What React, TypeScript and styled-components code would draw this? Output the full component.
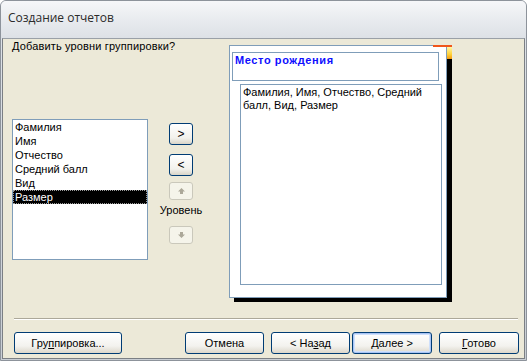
import React from "react";
import styled, { createGlobalStyle, css } from "styled-components";

const GlobalStyle = createGlobalStyle`
    html, body {
        margin: 0;
        padding: 0;
        background: #ffffff;
    }
    body {
        font-family: "Liberation Sans", Arial, sans-serif;
        font-size: 11px;
        color: #000000;
    }
`;

const Window = styled.div`
    width: 527px;
    height: 361px;
    display: flex;
    flex-direction: column;
    box-sizing: border-box;
    border-radius: 6px 6px 0 0;
    overflow: hidden;
    background: #cfd3d9;
    border: 1px solid #8d939b;
`;

const TitleBar = styled.div`
    height: 37px;
    flex: none;
    box-sizing: border-box;
    padding: 9px 0 0 7px;
    background: linear-gradient(#f6f7f9, #e6e9ed 60%, #dde1e6);
    font-family: "Open Sans", "Liberation Sans", sans-serif;
    font-size: 12px;
    line-height: 16px;
    color: #2b2b2b;
`;

const Frame = styled.div`
    flex: 1;
    display: flex;
    padding: 0 1px 1px 1px;
    background: linear-gradient(#dde1e6, #c9ced4);
`;

const Body = styled.div`
    flex: 1;
    display: flex;
    flex-direction: column;
    background: #ece9d8;
    border: 1px solid #7b7f84;
    border-top-color: #9aa0a7;
`;

const Main = styled.div`
    height: 279px;
    display: flex;
    align-items: flex-start;
    padding-left: 9px;
`;

const LeftPane = styled.div`
    width: 217px;
    display: flex;
    flex-direction: column;
`;

const Heading = styled.div`
    line-height: 14px;
    white-space: nowrap;
    letter-spacing: 0.15px;
`;

const Picker = styled.div`
    margin-top: 66px;
    display: flex;
    align-items: flex-start;
`;

const ListBox = styled.div`
    width: 136px;
    height: 141px;
    box-sizing: border-box;
    border: 1px solid #7f9db9;
    background: #ffffff;
    padding: 0;
`;

const ListItem = styled.div<{ $selected?: boolean }>`
    line-height: 14px;
    padding-left: 2px;
    white-space: nowrap;
    ${p =>
        p.$selected &&
        css`
            background: #000000;
            color: #ffffff;
            outline: 1px dotted #9a9a9a;
            outline-offset: -1px;
        `}
`;

const Controls = styled.div`
    width: 48px;
    margin-left: 9px;
    padding-top: 4px;
    display: flex;
    flex-direction: column;
    align-items: center;
`;

const SmallButton = styled.button<{ $gap?: number }>`
    width: 24px;
    height: 22px;
    margin: ${p => p.$gap ?? 0}px 0 0 0;
    padding: 0;
    box-sizing: border-box;
    border: 1px solid #003c74;
    border-radius: 3px;
    background: linear-gradient(#ffffff, #f2f1ec 70%, #d9d5c8);
    font-family: "Liberation Sans", Arial, sans-serif;
    font-size: 12px;
    line-height: 18px;
    color: #000000;
`;

const DisabledButton = styled.div<{ $gap?: number }>`
    width: 24px;
    height: 18px;
    margin-top: ${p => p.$gap ?? 0}px;
    box-sizing: border-box;
    border: 1px solid #cac8bb;
    border-radius: 3px;
    background: #f5f4ea;
    display: flex;
    align-items: center;
    justify-content: center;
`;

const LevelLabel = styled.div`
    margin-top: 3px;
    line-height: 14px;
    white-space: nowrap;
`;

const Preview = styled.div`
    position: relative;
    width: 218px;
    height: 253px;
    margin-top: 6px;
    box-sizing: border-box;
    border: 1px solid #7f9db9;
    background: #ffffff;
    box-shadow: 5px 4px 0 #000000;
    display: flex;
    flex-direction: column;
    align-items: flex-start;
`;

const Marker = styled.div`
    position: absolute;
    top: -1px;
    left: 203px;
    width: 19px;
    height: 14px;
    border-top: 2px solid #f0561b;
    box-sizing: border-box;
    &::after {
        content: "";
        position: absolute;
        right: 0;
        top: 0;
        width: 5px;
        height: 12px;
        background: linear-gradient(#fff6a8, #ffd23a 60%, #f59a12);
    }
`;

const GroupHeader = styled.div`
    margin: 6px 0 0 2px;
    width: 207px;
    height: 29px;
    box-sizing: border-box;
    border: 1px solid #7f9db9;
    padding: 0 0 0 2px;
    font-weight: bold;
    color: #0f0fff;
    line-height: 14px;
    letter-spacing: 0.6px;
`;

const DetailBox = styled.div`
    margin: 3px 0 0 10px;
    width: 202px;
    height: 201px;
    box-sizing: border-box;
    border: 1px solid #7f9db9;
    padding: 1px 2px 0 2px;
    line-height: 13px;
`;

const Separator = styled.div`
    margin: 0 6px 0 11px;
    height: 1px;
    background: #aca899;
    border-bottom: 1px solid #ffffff;
`;

const ButtonRow = styled.div`
    margin-top: 12px;
    padding: 0 5px 0 11px;
    display: flex;
    align-items: center;
`;

const ButtonGroup = styled.div<{ $gap: number }>`
    display: flex;
    gap: ${p => p.$gap}px;
`;

const PushButton = styled.button<{ $width: number; $default?: boolean }>`
    width: ${p => p.$width}px;
    height: 22px;
    padding: 0;
    box-sizing: border-box;
    border: 1px solid #003c74;
    border-radius: 3px;
    background: linear-gradient(#ffffff, #f3f2ee 65%, #dcd7cb);
    font-family: "Liberation Sans", Arial, sans-serif;
    font-size: 11px;
    color: #000000;
    ${p =>
        p.$default &&
        css`
            box-shadow: inset 0 0 0 1px #a8c4f4, inset 0 0 0 2px #cfe0fb;
        `}
`;

const Spacer = styled.div`
    flex: 1;
`;

const Arrow: React.FC<{ down?: boolean }> = ({ down }) => (
    <svg width="7" height="6" viewBox="0 0 7 6" style={down ? { transform: "rotate(180deg)" } : undefined}>
        <path d="M3.5 0 L7 3.5 L5 3.5 L5 6 L2 6 L2 3.5 L0 3.5 Z" fill="#aca899" />
    </svg>
);

const fields = ["Фамилия", "Имя", "Отчество", "Средний балл", "Вид", "Размер"];

export default function App() {
    return (
        <>
            <GlobalStyle />
            <Window>
                <TitleBar>Создание отчетов</TitleBar>
                <Frame>
                    <Body>
                        <Main>
                            <LeftPane>
                                <Heading>Добавить уровни группировки?</Heading>
                                <Picker>
                                    <ListBox>
                                        {fields.map(f => (
                                            <ListItem key={f} $selected={f === "Размер"}>
                                                {f}
                                            </ListItem>
                                        ))}
                                    </ListBox>
                                    <Controls>
                                        <SmallButton>&gt;</SmallButton>
                                        <SmallButton $gap={9}>&lt;</SmallButton>
                                        <DisabledButton $gap={6}>
                                            <Arrow />
                                        </DisabledButton>
                                        <LevelLabel>Уровень</LevelLabel>
                                        <DisabledButton $gap={9}>
                                            <Arrow down />
                                        </DisabledButton>
                                    </Controls>
                                </Picker>
                            </LeftPane>
                            <Preview>
                                <Marker />
                                <GroupHeader>Место рождения</GroupHeader>
                                <DetailBox>
                                    Фамилия, Имя, Отчество, Средний
                                    <br />
                                    балл, Вид, Размер
                                </DetailBox>
                            </Preview>
                        </Main>
                        <Separator />
                        <ButtonRow>
                            <PushButton $width={108}>
                                Гру<u>п</u>пировка...
                            </PushButton>
                            <Spacer />
                            <ButtonGroup $gap={7}>
                                <PushButton $width={79}>Отмена</PushButton>
                                <ButtonGroup $gap={2}>
                                    <PushButton $width={79}>
                                        &lt; На<u>з</u>ад
                                    </PushButton>
                                    <PushButton $width={80} $default>
                                        <u>Д</u>алее &gt;
                                    </PushButton>
                                </ButtonGroup>
                                <PushButton $width={80}>
                                    <u>Г</u>отово
                                </PushButton>
                            </ButtonGroup>
                        </ButtonRow>
                    </Body>
                </Frame>
            </Window>
        </>
    );
}
